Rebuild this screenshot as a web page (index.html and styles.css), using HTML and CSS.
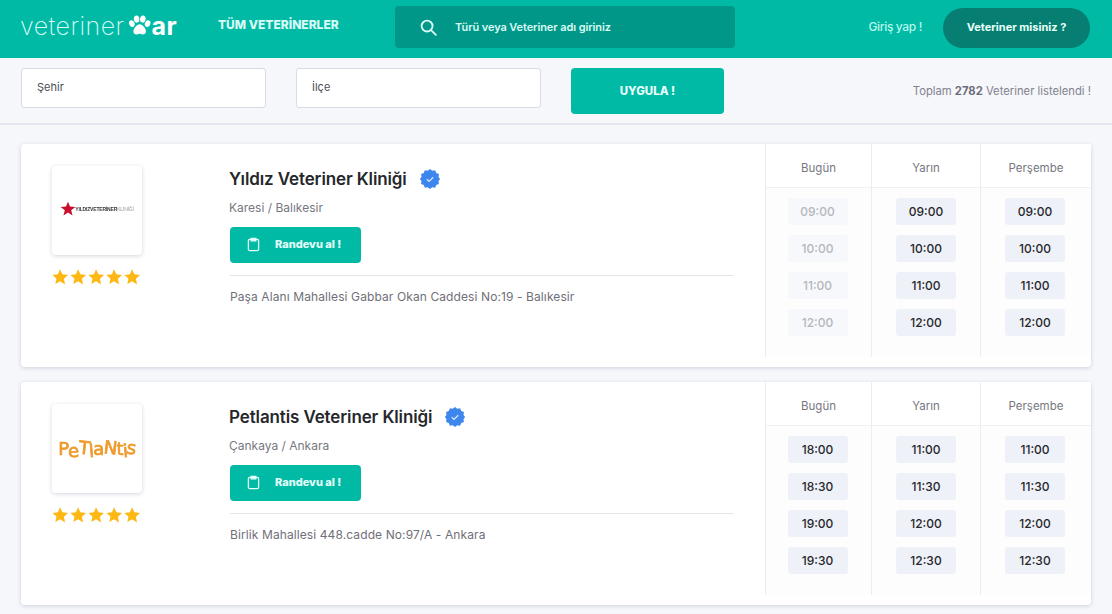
FILE: index.html
```html
<!DOCTYPE html>
<html lang="tr">
<head>
  <meta charset="UTF-8" />
  <meta name="viewport" content="width=device-width, initial-scale=1" />
  <title>Veterinerar</title>
  <link rel="stylesheet" href="styles.css">
</head>
<body>

<header class="topbar">
  <a class="logo" href="#">
    <span class="logo-thin">veteriner</span>
    <svg class="logo-paw" viewBox="0 0 24 22" width="23" height="21" fill="#fff">
      <ellipse cx="4" cy="9" rx="2.8" ry="3.6" transform="rotate(-25 4 9)"/>
      <ellipse cx="9" cy="4.2" rx="2.9" ry="3.8" transform="rotate(-10 9 4.2)"/>
      <ellipse cx="15.5" cy="4.2" rx="2.9" ry="3.8" transform="rotate(10 15.5 4.2)"/>
      <ellipse cx="20.5" cy="9" rx="2.8" ry="3.6" transform="rotate(25 20.5 9)"/>
      <path d="M12.2 9.6c3 0 6.6 4.2 6.6 7.5 0 2.6-2.2 3.6-3.8 3.3-1.2-.2-1.9-.8-2.8-.8s-1.6.6-2.8.8c-1.6.3-3.8-.7-3.8-3.3 0-3.3 3.6-7.5 6.6-7.5z"/>
    </svg>
    <span class="logo-bold">ar</span>
  </a>
  <a class="nav-link" href="#">TÜM VETERİNERLER</a>
  <div class="search">
    <svg viewBox="0 0 18 18" width="17" height="17" fill="none" stroke="#d8fbf5" stroke-width="2" stroke-linecap="round">
      <circle cx="7.5" cy="7.5" r="5.8"/>
      <path d="M12 12l4.8 4.8"/>
    </svg>
    <span>Türü veya Veteriner adı giriniz</span>
  </div>
  <a class="login" href="#">Giriş yap !</a>
  <a class="vet-btn" href="#">Veteriner misiniz ?</a>
</header>

<div class="filters">
  <div class="field">Şehir</div>
  <div class="field">İlçe</div>
  <button class="apply">UYGULA !</button>
  <div class="total">Toplam <b>2782</b> Veteriner listelendi !</div>
</div>

<main class="list" id="list"></main>

<script src="app.js"></script>
</body>
</html>
```

FILE: styles.css
```css
* {
  box-sizing: border-box;
}
html, body {
  height: 614px;
  overflow: hidden;
}
body {
  margin: 0;
  font-family: 'Inter', 'Liberation Sans', sans-serif;
  background-color: #f6f7fb;
  color: #25272b;
}
a {
  text-decoration: none;
}

.topbar {
  display: flex;
  align-items: center;
  height: 58px;
  padding: 0 22px 0 21px;
  background-color: #00baa6;
  color: white;
}
.logo {
  display: flex;
  align-items: center;
  width: 197px;
  height: 50px;
  margin-bottom: 7px;
  color: #d9fbf6;
}
.logo-thin {
  margin-left: -1px;
  font-size: 25px;
  font-weight: 200;
  letter-spacing: 0.45px;
}
.logo-paw {
  margin: 0 1px 0 3px;
}
.logo-bold {
  font-size: 25px;
  font-weight: 700;
  letter-spacing: 0.4px;
  color: white;
}
.nav-link {
  width: 177px;
  margin-bottom: 10px;
  font-size: 12px;
  font-weight: 800;
  color: #d9fbf6;
}
.search {
  display: flex;
  align-items: center;
  gap: 18px;
  width: 340px;
  height: 42px;
  margin-top: -4px;
  padding-left: 25px;
  border-radius: 4px;
  background-color: #009788;
  font-size: 11px;
  font-weight: 600;
  letter-spacing: -0.1px;
  color: #d8fbf5;
}
.login {
  margin-left: auto;
  margin-right: 21px;
  margin-bottom: 5px;
  font-size: 12px;
  font-weight: 500;
  letter-spacing: -0.35px;
  color: #b5f7ec;
}
.vet-btn {
  display: flex;
  align-items: center;
  justify-content: center;
  width: 147px;
  height: 40px;
  margin-top: -2px;
  padding-bottom: 2px;
  border-radius: 20px;
  background-color: #067f72;
  font-size: 11px;
  font-weight: 700;
  color: #e9fffb;
}

.filters {
  display: flex;
  align-items: flex-start;
  height: 67px;
  padding: 10px 21px 0;
  border-bottom: 2px solid #e4e5ee;
}
.field {
  display: flex;
  align-items: center;
  width: 245px;
  height: 40px;
  margin-right: 30px;
  padding: 0 0 2px 15px;
  background: white;
  border: 1px solid #d9dbe4;
  border-radius: 3px;
  font-size: 11px;
  color: #4c4e55;
}
.apply {
  width: 153px;
  height: 46px;
  border: none;
  border-radius: 4px;
  background-color: #00baa6;
  font-family: inherit;
  font-size: 11.5px;
  font-weight: 800;
  color: #e9fffb;
}
.total {
  margin-left: auto;
  padding-top: 16px;
  font-size: 11.25px;
  color: #82828e;
}
.total b {
  font-weight: 700;
  color: #6d6d79;
}

.list {
  display: flex;
  flex-direction: column;
  gap: 15px;
  padding: 19px 21px 0;
}
.card {
  display: flex;
  height: 223px;
  background: white;
  border-radius: 4px;
  box-shadow: 0 1px 4px rgba(40, 50, 90, 0.18);
}

.card-left {
  width: 208px;
  padding: 22px 0 0 31px;
}
.card-logo {
  display: flex;
  align-items: center;
  justify-content: center;
  width: 90px;
  height: 89px;
  border-radius: 4px;
  box-shadow: 0 1px 4px rgba(40, 50, 90, 0.2);
  overflow: hidden;
}
.stars {
  display: flex;
  margin: 13px 0 0 -1px;
}

/* clinic logos */
.yildiz {
  display: flex;
  align-items: center;
  margin-bottom: 3px;
  filter: blur(0.4px);
}
.yildiz-text {
  margin-left: -1px;
  font-family: 'Liberation Sans', sans-serif;
  font-size: 5px;
  font-weight: 700;
  color: #3a3a3e;
  white-space: nowrap;
  letter-spacing: -0.17px;
}
.yildiz-text span {
  font-weight: 400;
  color: #9a9a9e;
}
.petlantis {
  display: flex;
  margin-bottom: 1px;
  font-family: 'DejaVu Sans', sans-serif;
  font-size: 18px;
  letter-spacing: -0.7px;
  color: #ee9a2a;
  -webkit-text-stroke: 0.7px #ee9a2a;
  filter: blur(0.3px);
}
.petlantis span:nth-child(even) {
  transform: translateY(2px) rotate(-5deg);
}
.petlantis span:nth-child(3n) {
  transform: translateY(-1px) rotate(6deg);
}

.card-info {
  width: 536px;
  padding: 22px 31px 0 0;
}
.card-name {
  display: flex;
  align-items: center;
  gap: 12px;
  height: 26px;
  margin: 0;
  font-size: 17px;
  font-weight: 600;
  letter-spacing: -0.12px;
  color: #25272b;
}
.card-place {
  margin: 7px 0 0;
  font-size: 12px;
  line-height: 18px;
  color: #77777f;
}
.appointment {
  display: inline-flex;
  align-items: center;
  gap: 15px;
  width: 131px;
  height: 36px;
  margin: 10px 0 0 1px;
  padding: 0 0 2px 17px;
  border: none;
  border-radius: 4px;
  background-color: #00baa6;
  font-family: inherit;
  font-size: 11px;
  font-weight: 800;
  color: #e4fffa;
}
.card-address {
  margin: 12px 0 0 1px;
  padding-top: 12px;
  border-top: 1px solid #e6e6ea;
  font-size: 12px;
  line-height: 18px;
  letter-spacing: 0.1px;
  color: #6f6f78;
}

.schedule {
  display: flex;
  flex: 1;
  height: 213px;
  background-color: #fdfdfe;
}
.day {
  display: flex;
  flex-direction: column;
  align-items: center;
  gap: 10px;
  border-left: 1px solid #ecedf2;
}
.day:nth-child(1) {
  width: 106px;
  padding-right: 2px;
}
.day:nth-child(2) {
  width: 109px;
}
.day:nth-child(3) {
  width: 111px;
  padding-right: 2px;
}
.day-name {
  display: flex;
  align-items: center;
  justify-content: center;
  align-self: stretch;
  height: 44px;
  margin-right: -2px;
  padding-top: 4px;
  border-bottom: 1px solid #f0f1f5;
  background: white;
  font-size: 11.5px;
  color: #77777f;
}
.day:nth-child(2) .day-name {
  margin-right: 0;
}
.slot {
  display: flex;
  align-items: center;
  justify-content: center;
  width: 60px;
  height: 27px;
  padding-bottom: 1px;
  border-radius: 3px;
  background-color: #eef1f7;
  font-size: 12px;
  font-weight: 500;
  color: #25272b;
}
.slot.past {
  background-color: #f7f8fb;
  color: #b4b6be;
}
```

FILE: app.js
```js
const list = document.getElementById('list');

const star = `<svg viewBox="0 0 24 24" width="18" height="18" fill="#fdb813"><path d="M12 1.5l3.2 6.9 7.5.9-5.5 5.1 1.5 7.5L12 17.8 5.8 21.4l1.5-7.5L1.8 9.3l7.5-.9z"/></svg>`;

const badge = `<svg viewBox="0 0 24 24" width="22" height="22"><path fill="#3d86ee" d="M12 1l2.5 1.9 3.1-.4 1.2 2.9 2.9 1.2-.4 3.1L23 12l-1.7 2.3.4 3.1-2.9 1.2-1.2 2.9-3.1-.4L12 23l-2.5-1.9-3.1.4-1.2-2.9-2.9-1.2.4-3.1L1 12l1.7-2.3-.4-3.1 2.9-1.2 1.2-2.9 3.1.4z"/><path fill="none" stroke="#d7e6fd" stroke-width="1.5" d="M8.5 12.3l2.4 2.3 4.6-4.6"/></svg>`;

const clipboard = `<svg viewBox="0 0 14 16" width="13" height="15" fill="none" stroke="#e4fffa" stroke-width="1.4"><rect x="1.5" y="2.5" width="11" height="12" rx="1.5"/><path d="M4.5 1.5h5v2.5h-5z" fill="#e4fffa"/></svg>`;

const yildizLogo = `<div class="yildiz">
  <svg viewBox="0 0 24 24" width="16" height="16" fill="#c8102e"><path d="M12 1l3 7.4 8 .5-6.2 5 2 7.8L12 17.4 5.2 21.7l2-7.8L1 8.9l8-.5z"/></svg>
  <span class="yildiz-text">YILDIZVETERİNER<span>KLİNİĞİ</span></span>
</div>`;

const petlantisLogo = `<div class="petlantis">${[...'PeTlaNtis'].map(c => `<span>${c}</span>`).join('')}</div>`;

const clinics = [
  {
    name: 'Yıldız Veteriner Kliniği',
    place: 'Karesi / Balıkesir',
    address: 'Paşa Alanı Mahallesi Gabbar Okan Caddesi No:19 - Balıkesir',
    logo: yildizLogo,
    days: [
      { name: 'Bugün', past: true, slots: ['09:00', '10:00', '11:00', '12:00'] },
      { name: 'Yarın', slots: ['09:00', '10:00', '11:00', '12:00'] },
      { name: 'Perşembe', slots: ['09:00', '10:00', '11:00', '12:00'] }
    ]
  },
  {
    name: 'Petlantis Veteriner Kliniği',
    place: 'Çankaya / Ankara',
    address: 'Birlik Mahallesi 448.cadde No:97/A - Ankara',
    logo: petlantisLogo,
    days: [
      { name: 'Bugün', slots: ['18:00', '18:30', '19:00', '19:30'] },
      { name: 'Yarın', slots: ['11:00', '11:30', '12:00', '12:30'] },
      { name: 'Perşembe', slots: ['11:00', '11:30', '12:00', '12:30'] }
    ]
  }
];

clinics.forEach(clinic => {
  const card = document.createElement('article');
  card.className = 'card';
  const days = clinic.days.map(day => `
    <div class="day">
      <div class="day-name">${day.name}</div>
      ${day.slots.map(s => `<div class="slot${day.past ? ' past' : ''}">${s}</div>`).join('')}
    </div>`).join('');
  card.innerHTML = `
    <div class="card-left">
      <div class="card-logo">${clinic.logo}</div>
      <div class="stars">${star.repeat(5)}</div>
    </div>
    <div class="card-info">
      <h2 class="card-name">${clinic.name} ${badge}</h2>
      <p class="card-place">${clinic.place}</p>
      <button class="appointment">${clipboard} Randevu al !</button>
      <p class="card-address">${clinic.address}</p>
    </div>
    <div class="schedule">${days}</div>
  `;
  list.appendChild(card);
});
```
